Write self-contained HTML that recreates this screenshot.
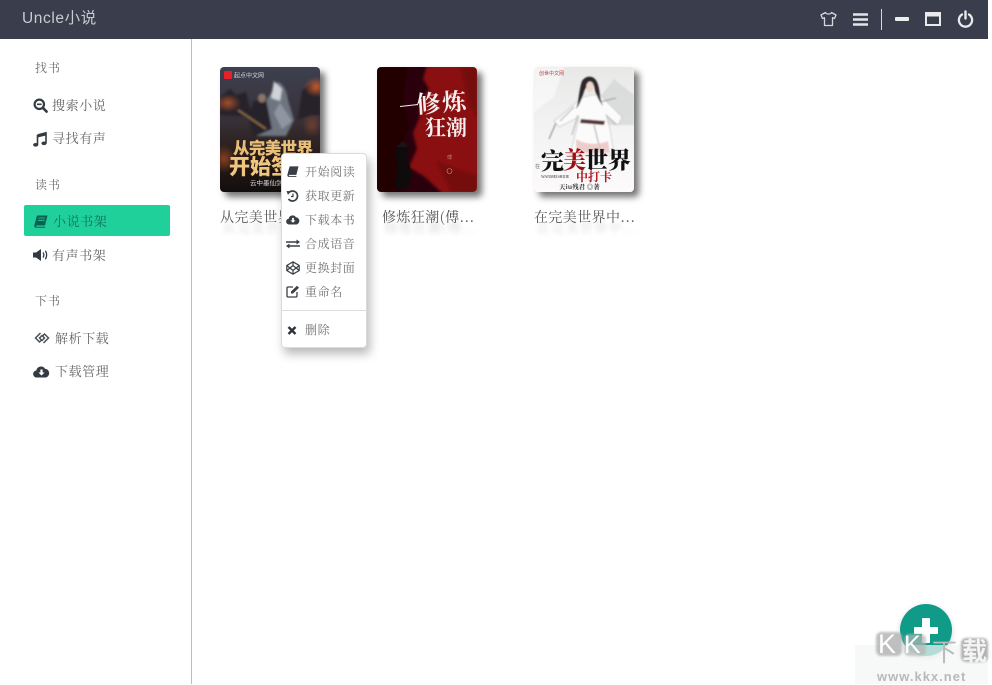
<!DOCTYPE html>
<html lang="zh">
<head>
<meta charset="utf-8">
<title>Uncle小说</title>
<style>
html,body{margin:0;padding:0;background:#fff;}
body{width:992px;height:684px;overflow:hidden;position:relative;font-family:"Liberation Sans","Noto Serif CJK SC",serif;}
.a{position:absolute;white-space:nowrap;}
#hd{left:0;top:0;width:988px;height:39px;background:#393d4c;}
#logo{left:22px;top:9px;font:15.500px/20px "Liberation Sans","Noto Sans CJK SC",sans-serif;color:#c9cbd0;letter-spacing:.6px;filter:blur(.3px);}
#side{left:191px;top:39px;width:1px;height:645px;background:#bdbdbd;}
.lab{left:35px;font:12px/16px "Noto Serif CJK SC",serif;color:#6c6c6c;letter-spacing:1px;filter:blur(.3px);}
.it{font:13px/18px "Noto Serif CJK SC",serif;color:#666;letter-spacing:.6px;filter:blur(.3px);}
#act{left:24px;top:205px;width:146px;height:31px;background:#1fd09b;border-radius:2px;}
.cov{position:absolute;top:67px;width:100px;height:125px;border-radius:4px;box-shadow:5px 5px 7px rgba(0,0,0,.55);overflow:hidden;}
.cov svg{display:block;filter:blur(.35px);}
.ti{top:207px;font:14px/20px "Noto Serif CJK SC",serif;color:#555;letter-spacing:.4px;text-shadow:2px 11px 5px rgba(0,0,0,.16);filter:blur(.3px);}
#menu{left:281px;top:153px;width:84px;height:193px;background:#fff;border:1px solid #dcdcdc;border-radius:4px;box-shadow:3px 6px 10px rgba(0,0,0,.28);}
.mt{font:12px/16px "Noto Serif CJK SC",serif;color:#747474;letter-spacing:.6px;left:305px;filter:blur(.3px);}
#fab{left:900px;top:604px;width:52px;height:52px;border-radius:50%;background:#0f9b88;box-shadow:0 2px 6px rgba(0,0,0,.18);}
svg.i{position:absolute;overflow:visible;}
</style>
</head>
<body>
<div class="a" id="hd"></div>
<div class="a" id="logo">Uncle小说</div>

<!-- header icons -->
<svg class="i" style="left:820px;top:11px" width="17" height="16" viewBox="0 0 17 16"><path d="M5.500 1.500 1 4l1.500 3.500 2-.8V14.500h8V6.700l2 .8L16 4 11.500 1.500c-.5 2-5.500 2-6 0z" fill="none" stroke="#d5d7db" stroke-width="1.300" stroke-linejoin="round"/></svg>
<svg class="i" style="left:853px;top:13px" width="15" height="13" viewBox="0 0 15 13"><path d="M0 1.500h15M0 6.500h15M0 11.500h15" stroke="#e4e5e8" stroke-width="2.600"/></svg>
<div class="a" style="left:881px;top:9px;width:1px;height:21px;background:#d8d9dc"></div>
<div class="a" style="left:895px;top:17px;width:14px;height:4px;background:#eceded;border-radius:1px"></div>
<svg class="i" style="left:925px;top:12px" width="16" height="14" viewBox="0 0 16 14"><path d="M0 0h16v14H0z" fill="#e9eaec"/><path d="M2 4.500h12V12H2z" fill="#393d4c"/></svg>
<svg class="i" style="left:957px;top:10px" width="17" height="18" viewBox="0 0 17 18"><path d="M5 4.500a6.600 6.600 0 1 0 7 0" fill="none" stroke="#e9eaec" stroke-width="2.300" stroke-linecap="round"/><path d="M8.500 1.500v7" stroke="#e9eaec" stroke-width="2.400" stroke-linecap="round"/></svg>

<div class="a" id="side"></div>

<!-- sidebar -->
<div class="a lab" style="top:60px">找书</div>
<svg class="i" style="left:33px;top:98px" width="15" height="15" viewBox="0 0 15 15"><circle cx="6.300" cy="6.300" r="4.700" fill="none" stroke="#333a42" stroke-width="2.200"/><path d="M4 6.300h4.600" stroke="#333a42" stroke-width="1.600"/><path d="m10 10 3.600 3.600" stroke="#333a42" stroke-width="2.600" stroke-linecap="round"/></svg>
<div class="a it" style="left:52px;top:96px">搜索小说</div>
<svg class="i" style="left:33px;top:132px" width="14" height="15" viewBox="0 0 14 15"><path d="M4.500 3 13 .8v10.400" fill="none" stroke="#333a42" stroke-width="1.600"/><path d="M4.500 3v9.500" stroke="#333a42" stroke-width="1.600"/><path d="m4.500 2.500 8.500-2v3l-8.500 2z" fill="#333a42"/><ellipse cx="2.700" cy="12.800" rx="2.600" ry="1.800" fill="#333a42"/><ellipse cx="11" cy="11.300" rx="2.600" ry="1.800" fill="#333a42"/></svg>
<div class="a it" style="left:52px;top:129px">寻找有声</div>

<div class="a lab" style="top:177px">读书</div>
<div class="a" id="act"></div>
<svg class="i" style="left:34px;top:215px" width="14" height="13" viewBox="0 0 14 13"><path d="M3 .5h10.500L11 10.500H2.800c-1 0-1 1.300 0 1.300H11v1H2.200C.7 12.800 0 11.500.4 10z" fill="#0e5f52"/><path d="M4.500 3h6.500M4 5.300h6.500" stroke="#1fd09b" stroke-width=".8"/></svg>
<div class="a it" style="left:53px;top:212px;color:#14705e">小说书架</div>
<svg class="i" style="left:33px;top:248px" width="15" height="14" viewBox="0 0 15 14"><path d="M0 4.500h3L8 1v12L3 9.500H0z" fill="#333a42"/><path d="M10 4.500c1 1.500 1 3.500 0 5M12.300 2.800c1.800 2.500 1.800 6 0 8.400" fill="none" stroke="#333a42" stroke-width="1.300"/></svg>
<div class="a it" style="left:52px;top:246px">有声书架</div>

<div class="a lab" style="top:293px">下书</div>
<svg class="i" style="left:34px;top:331px" width="16" height="14" viewBox="0 0 16 14"><path d="M6.500 2 1.500 7l4 4 2-2-2-2 3-3M9.500 12l5-5-4-4-2 2 2 2-3 3" fill="none" stroke="#4a4f57" stroke-width="1.500"/></svg>
<div class="a it" style="left:55px;top:329px">解析下载</div>
<svg class="i" style="left:33px;top:365px" width="17" height="13" viewBox="0 0 17 13"><path d="M4 12.500a3.500 3.500 0 0 1-.7-7A4.800 4.800 0 0 1 12 3.700a4.500 4.500 0 0 1 1 8.800z" fill="#333a42"/><path d="M7.400 4.500h2.200v3h2L8.500 10.500l-3.100-3h2z" fill="#fff"/></svg>
<div class="a it" style="left:55px;top:362px">下载管理</div>

<!-- cover 1 -->
<div class="cov" style="left:220px">
<svg width="100" height="125" viewBox="0 0 100 125">
<defs>
<linearGradient id="g1" x1="0" y1="0" x2="0" y2="1"><stop offset="0" stop-color="#3d404f"/><stop offset=".4" stop-color="#38323a"/><stop offset=".7" stop-color="#2a1c18"/><stop offset="1" stop-color="#120e0e"/></linearGradient>
<radialGradient id="f1"><stop offset="0" stop-color="#c9592a"/><stop offset="1" stop-color="#c9592a" stop-opacity="0"/></radialGradient>
<filter id="b1"><feGaussianBlur stdDeviation="1"/></filter>
</defs>
<rect width="100" height="125" fill="url(#g1)"/>
<g filter="url(#b1)">
<path d="M0 48V30l10-8 6 6 10-3 6 25zM100 48V20l-10-4-8 8-4 28z" fill="#26232b"/>
<ellipse cx="96" cy="20" rx="12" ry="10" fill="url(#f1)"/>
<ellipse cx="8" cy="36" rx="13" ry="9" fill="url(#f1)" opacity=".8"/>
<ellipse cx="4" cy="92" rx="12" ry="14" fill="url(#f1)" opacity=".6"/>
<ellipse cx="92" cy="58" rx="10" ry="12" fill="url(#f1)" opacity=".4"/>
<path d="M58 15c6 2 9 10 10 18l6 20-8 16H36l-6-14 14-18z" fill="#6d7480"/>
<path d="M54 14l8 8-2 12-9-3z" fill="#cfd2d8"/>
<path d="M60 36l12 18-10 8-8-16z" fill="#8f96a2"/>
<path d="M34 34l12-2 6 30-18 8-6-22z" fill="#26232a"/>
<ellipse cx="42" cy="31" rx="4" ry="4.500" fill="#8d7468"/>
<path d="M18 43 46 62" stroke="#9a7448" stroke-width="1.500"/>
</g>
<rect x="4" y="4" width="8" height="8" rx="1" fill="#e8202a"/>
<text x="14" y="10.500" font-family="Noto Sans CJK SC,sans-serif" font-size="6" fill="#d5d5d5">起点中文网</text>
<text x="13" y="87" font-family="Noto Sans CJK SC,sans-serif" font-weight="900" font-size="16.500" fill="#e7bf78" textLength="80">从完美世界</text>
<text x="9" y="107" font-family="Noto Sans CJK SC,sans-serif" font-weight="900" font-size="21" fill="#f0c67e">开始签到</text>
<text x="30" y="118" font-family="Noto Sans CJK SC,sans-serif" font-size="6.500" fill="#d8d8d8">云中墨仙剑</text>
</svg>
</div>
<div class="a ti" style="left:220px">从完美世界...</div>

<!-- cover 2 -->
<div class="cov" style="left:377px">
<svg width="100" height="125" viewBox="0 0 100 125">
<defs><filter id="b2"><feGaussianBlur stdDeviation="1.200"/></filter></defs>
<rect width="100" height="125" fill="#8a0f11"/>
<g filter="url(#b2)">
<path d="M-2-2H50L46 12 52 22 44 34 42 52 36 66 40 82 32 100 48 110 66 127H-2z" fill="#2c0508"/>
<path d="M0 0h30L26 30 32 60 20 90 24 125H0z" fill="#230406"/>
<path d="M84 0h16v50l-8-15zM60 95l40 14v16H74z" fill="#740c0e"/>
</g>
<path d="M18 81l8-5 7 3-3 9 5 20-3 12-14 3 2-22z" fill="#0f0a0c"/>
<path d="M19 80h13l-6-6z" fill="#1b1416"/>
<path d="M23 39.500l18-2" stroke="#f2eeee" stroke-width="1.100"/>
<text font-family="Noto Serif CJK SC,serif" font-weight="700" font-size="24" fill="#f4eeee" transform="translate(40 46) rotate(-4)" textLength="50">修炼</text>
<text font-family="Noto Serif CJK SC,serif" font-weight="700" font-size="21" fill="#f4eeee" transform="translate(48 68)">狂潮</text>
<text x="70" y="92" font-family="Noto Sans CJK SC,sans-serif" font-size="5" fill="#c98f8f" opacity=".8">傅</text>
<circle cx="72.500" cy="104" r="2.500" fill="none" stroke="#c98f8f" stroke-width=".6"/>
</svg>
</div>
<div class="a ti" style="left:382px">修炼狂潮(傅...</div>

<!-- cover 3 -->
<div class="cov" style="left:534px">
<svg width="100" height="125" viewBox="0 0 100 125">
<defs>
<linearGradient id="g3" x1="0" y1="0" x2="0" y2="1"><stop offset="0" stop-color="#e8e8e7"/><stop offset=".5" stop-color="#f3f3f3"/><stop offset="1" stop-color="#fcfafa"/></linearGradient>
<filter id="b3"><feGaussianBlur stdDeviation=".7"/></filter>
</defs>
<rect width="100" height="125" fill="url(#g3)"/>
<g filter="url(#b3)">
<path d="M66 30 80 12l20 16v30H72z" fill="#d4d7d6" opacity=".75"/>
<path d="M0 0h30L20 30 0 45z" fill="#fff" opacity=".5"/>
<path d="M50 30c-8 4-16 14-30 24l5 6 20-10-3 14-6 24h44l-4-26-4-14 12 10 4-8-22-22-8 0z" fill="#fbfbfb" stroke="#c9caca" stroke-width=".8"/>
<path d="M44 48l-6 20M60 58l6 24M72 48l10 10M40 40l-14 14" stroke="#c2c3c3" stroke-width="1.500" fill="none"/>
<path d="M48 14c4-6 12-6 15 1 3 6 2 14 6 24 -5-6-8-14-9-20-4 0-7 1-9 3-3 8-4 14-9 20 3-8 3-20 6-28z" fill="#2d282a"/>
<ellipse cx="56" cy="20" rx="3.800" ry="5.500" fill="#ecd8cd"/>
<path d="M47 52l24 2-1 4-24-2z" fill="#5a3436"/>
<path d="M42 72c10 6 22 6 32 2l2 12H42z" fill="#eac4c2" opacity=".85"/>
<path d="M22 56 15 72" stroke="#8e9a9a" stroke-width="1.200"/>
<path d="M66 35l16 -4" stroke="#8e9a9a" stroke-width="1"/>
</g>
<text x="5" y="8" font-family="Noto Sans CJK SC,sans-serif" font-size="5" fill="#c23b45">创世中文网</text>
<text x="1" y="101" font-family="Noto Sans CJK SC,sans-serif" font-size="5" fill="#666">在</text>
<text x="7" y="102" font-family="Noto Serif CJK SC,serif" font-weight="900" font-size="23" fill="#111">完</text>
<text x="29" y="101" font-family="Noto Serif CJK SC,serif" font-weight="900" font-size="23" fill="#9c1015">美</text>
<text x="51" y="101" font-family="Noto Serif CJK SC,serif" font-weight="900" font-size="23" fill="#111">世</text>
<text x="74" y="101" font-family="Noto Serif CJK SC,serif" font-weight="900" font-size="23" fill="#111">界</text>
<text x="42" y="114" font-family="Noto Serif CJK SC,serif" font-weight="700" font-size="12" fill="#b3161b">中打卡</text>
<text x="7" y="111" font-family="Liberation Serif,serif" font-size="4" fill="#333">WANMEISHIJIE</text>
<text x="25" y="122" font-family="Noto Serif CJK SC,serif" font-weight="700" font-size="6.500" fill="#333">天iu残君 ◎著</text>
</svg>
</div>
<div class="a ti" style="left:534px">在完美世界中...</div>

<!-- context menu -->
<div class="a" id="menu"></div>
<svg class="i" style="left:287px;top:166px" width="12" height="11" viewBox="0 0 14 13"><path d="M3 .5h10.500L11 10.500H2.800c-1 0-1 1.300 0 1.300H11v1H2.200C.7 12.800 0 11.500.4 10z" fill="#3a3f46"/></svg>
<div class="a mt" style="top:164px">开始阅读</div>
<svg class="i" style="left:286px;top:190px" width="13" height="12" viewBox="0 0 13 12"><path d="M2.500 3a5 5 0 1 1 0 6" fill="none" stroke="#3a3f46" stroke-width="1.700"/><path d="M.5 1l4 .3L2 5z" fill="#3a3f46"/><path d="M7 3.500V6.500H5" fill="none" stroke="#3a3f46" stroke-width="1.200"/></svg>
<div class="a mt" style="top:188px">获取更新</div>
<svg class="i" style="left:286px;top:214px" width="14" height="11" viewBox="0 0 17 13"><path d="M4 12.500a3.500 3.500 0 0 1-.7-7A4.800 4.800 0 0 1 12 3.700a4.500 4.500 0 0 1 1 8.800z" fill="#3a3f46"/><path d="M7.400 4.500h2.200v3h2L8.500 10.500l-3.100-3h2z" fill="#fff"/></svg>
<div class="a mt" style="top:212px">下载本书</div>
<svg class="i" style="left:286px;top:239px" width="14" height="10" viewBox="0 0 14 10"><path d="M0 3h11M14 7H3" stroke="#3a3f46" stroke-width="1.600"/><path d="M10.500.5 14 3l-3.500 2.500zM3.500 4.500 0 7l3.500 2.500z" fill="#3a3f46"/></svg>
<div class="a mt" style="top:236px">合成语音</div>
<svg class="i" style="left:286px;top:261px" width="14" height="14" viewBox="0 0 14 14"><path d="M7 .8 13.200 4.500v5L7 13.200.8 9.500v-5zM.8 4.500 7 9.500l6.200-5M.8 9.500 7 4.500l6.200 5M7 .8v3.700M7 9.500v3.700" fill="none" stroke="#3a3f46" stroke-width="1.200"/></svg>
<div class="a mt" style="top:260px">更换封面</div>
<svg class="i" style="left:286px;top:285px" width="14" height="13" viewBox="0 0 14 13"><path d="M7 2H2.200C1.400 2 1 2.500 1 3.200v7.600c0 .7.400 1.200 1.200 1.200h7.600c.7 0 1.200-.5 1.200-1.200V7" fill="none" stroke="#3a3f46" stroke-width="1.300"/><path d="M5 6.500 11 .8l2 2L7 8.500H5z" fill="#3a3f46"/></svg>
<div class="a mt" style="top:284px">重命名</div>
<div class="a" style="left:282px;top:310px;width:84px;height:1px;background:#dcdcdc"></div>
<svg class="i" style="left:287px;top:326px" width="10" height="9" viewBox="0 0 10 9"><path d="M1.500 1 8.500 8M8.500 1 1.500 8" stroke="#2f343a" stroke-width="2.400"/></svg>
<div class="a mt" style="top:322px">删除</div>

<!-- FAB -->
<div class="a" id="fab"></div>
<div class="a" style="left:914px;top:627px;width:24px;height:7px;background:#fff;border-radius:1px"></div>
<div class="a" style="left:922px;top:618px;width:8px;height:25px;background:#fff;border-radius:1px"></div>

<!-- watermark -->
<div class="a" style="left:855px;top:645px;width:133px;height:39px;background:rgba(243,246,244,.72)"></div>
<div class="a" style="left:876px;top:632px;width:26px;height:24px;background:#b4b6b5;border-radius:5px;filter:blur(1px);opacity:.85"></div>
<div class="a" style="left:904px;top:634px;width:22px;height:22px;background:#b4b6b5;border-radius:5px;filter:blur(1px);opacity:.7"></div>
<div class="a" style="left:961px;top:638px;width:27px;height:24px;background:#a5a7a6;border-radius:5px;filter:blur(1px);opacity:.85"></div>
<div class="a" style="left:878px;top:630px;font:27px/28px 'Liberation Sans',sans-serif;color:#fff">K</div>
<div class="a" style="left:904px;top:631px;font:25px/28px 'Liberation Sans',sans-serif;color:#fff">K</div>
<div class="a" style="left:932px;top:636px;font:25px/30px 'Noto Sans CJK SC',sans-serif;color:#b9bbba">下</div>
<div class="a" style="left:962px;top:635px;font:bold 25px/30px 'Noto Sans CJK SC',sans-serif;color:#f4f4f4">载</div>
<div class="a" style="left:877px;top:669px;font:bold 13px/16px 'Liberation Sans',sans-serif;color:#b8bab9;letter-spacing:1px">www.kkx.net</div>
</body>
</html>
